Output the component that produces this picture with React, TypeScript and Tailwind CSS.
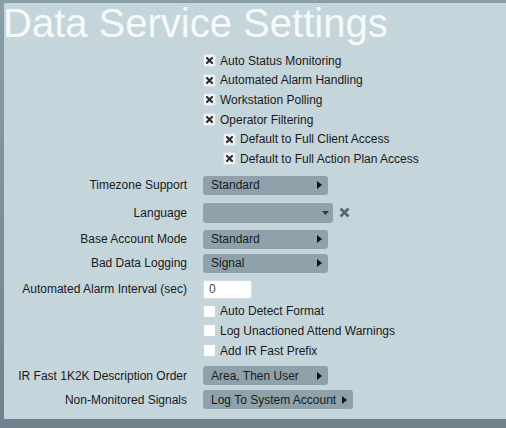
const font = { fontFamily: '"Liberation Sans", Arial, sans-serif' };

function Check({ checked }: { checked: boolean }) {
  return (
    <span
      className={`inline-flex h-[13px] w-[13px] shrink-0 items-center justify-center rounded-[2px] border ${
        checked ? 'border-[#d4dde1] bg-[#eef2f4]' : 'border-[#c9d3d8] bg-white'
      }`}
    >
      {checked && (
        <svg width="7" height="7" viewBox="0 0 7 7">
          <path d="M1 1L6 6M6 1L1 6" stroke="#2a2a2a" strokeWidth="2" strokeLinecap="square" />
        </svg>
      )}
    </span>
  );
}

function CheckRow({ label, checked, indent = false }: { label: string; checked: boolean; indent?: boolean }) {
  return (
    <div className={`flex h-[19.6px] items-center gap-[4px] pl-[199px] ${indent ? 'ml-5' : ''}`}>
      <Check checked={checked} />
      <span>{label}</span>
    </div>
  );
}

function Select({ value, width }: { value: string; width: string }) {
  return (
    <div className={`flex h-[19px] ${width} items-center justify-between rounded-[3px] bg-[#8fa2ab] pl-2 pr-[6px]`}>
      <span>{value}</span>
      <svg width="5" height="8" viewBox="0 0 5 8">
        <path d="M0 0L5 4L0 8Z" fill="#111" />
      </svg>
    </div>
  );
}

function Row({ label, children, className = '' }: { label: string; children: React.ReactNode; className?: string }) {
  return (
    <div className={`grid grid-cols-[183px_1fr] items-center gap-x-4 ${className}`}>
      <span className="text-right">{label}</span>
      <div className="flex items-center">{children}</div>
    </div>
  );
}

export default function App() {
  return (
    <div
      className="h-[428px] w-[506px] overflow-hidden bg-gradient-to-b from-[#8a9ea8] to-[#6f838e] pl-[4px] pt-[5px] pb-[7px]"
      style={font}
    >
      <div className="h-full bg-[#c5d5dc] text-[12px] text-[#1a1a1a]">
        <h1 className="-mt-[2px] -ml-[1px] text-[40px] leading-[40px] text-[#f6f9fa]">Data Service Settings</h1>

        <div className="mt-[8px]">
          <CheckRow label="Auto Status Monitoring" checked />
          <CheckRow label="Automated Alarm Handling" checked />
          <CheckRow label="Workstation Polling" checked />
          <CheckRow label="Operator Filtering" checked />
          <CheckRow label="Default to Full Client Access" checked indent />
          <CheckRow label="Default to Full Action Plan Access" checked indent />
        </div>

        <Row label="Timezone Support" className="mt-[7px]">
          <Select value="Standard" width="w-[125px]" />
        </Row>

        <Row label="Language" className="mt-[8px]">
          <div className="flex h-[20px] w-[130px] items-center justify-end rounded-[3px] bg-[#8fa2ab] pr-[4px]">
            <svg width="7" height="4" viewBox="0 0 7 4">
              <path d="M0 0H7L3.5 4Z" fill="#2a3a44" />
            </svg>
          </div>
          <svg className="ml-[6px]" width="11" height="11" viewBox="0 0 11 11">
            <path d="M1.5 1.5L9.5 9.5M9.5 1.5L1.5 9.5" stroke="#4d6879" strokeWidth="2.6" />
          </svg>
        </Row>

        <Row label="Base Account Mode" className="mt-[7px]">
          <Select value="Standard" width="w-[125px]" />
        </Row>

        <Row label="Bad Data Logging" className="mt-[5px]">
          <Select value="Signal" width="w-[125px]" />
        </Row>

        <Row label="Automated Alarm Interval (sec)" className="mt-[7px]">
          <div className="flex h-[19px] w-[49px] items-center rounded-[2px] border border-[#d3dce0] bg-white pl-[5px] text-[#444]">
            0
          </div>
        </Row>

        <div className="mt-[3px]">
          <CheckRow label="Auto Detect Format" checked={false} />
          <CheckRow label="Log Unactioned Attend Warnings" checked={false} />
          <CheckRow label="Add IR Fast Prefix" checked={false} />
        </div>

        <Row label="IR Fast 1K2K Description Order" className="mt-[6px]">
          <Select value="Area, Then User" width="w-[125px]" />
        </Row>

        <Row label="Non-Monitored Signals" className="mt-[5px]">
          <Select value="Log To System Account" width="w-[150px]" />
        </Row>
      </div>
    </div>
  );
}
